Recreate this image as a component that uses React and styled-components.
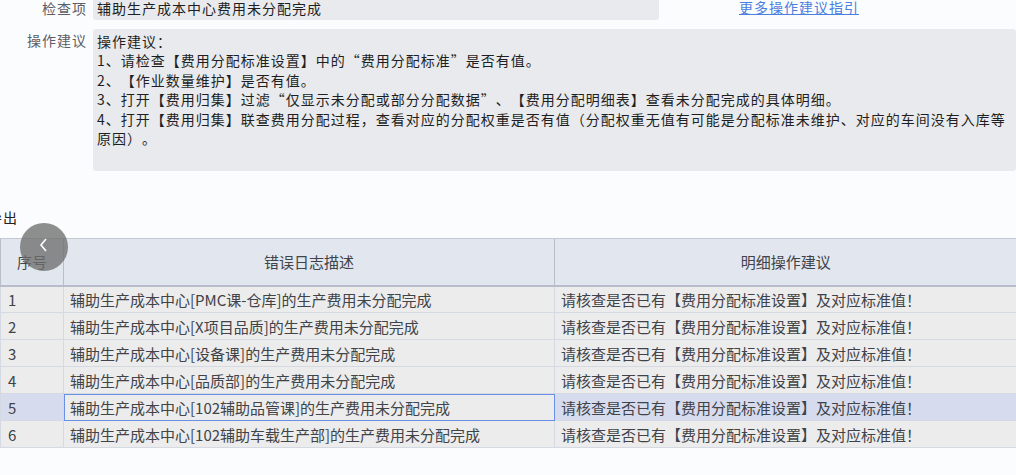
import styled, { createGlobalStyle } from "styled-components";

const GlobalStyle = createGlobalStyle`
  html, body {
    margin: 0;
    padding: 0;
    background: #fbfcfe;
    font-family: "Noto Sans CJK SC", "Noto Sans", sans-serif;
    text-spacing-trim: space-all;
    overflow: hidden;
  }
`;

const Page = styled.div`
  width: 1016px;
  height: 475px;
  overflow: hidden;
`;

const Form = styled.div`
  display: flex;
  flex-direction: column;
  gap: 9px;
  margin-top: -4px;
  letter-spacing: 1px;
`;

const FormRow = styled.div`
  display: flex;
  align-items: flex-start;
  gap: 6px;
`;

const Label = styled.div`
  width: 87px;
  flex: none;
  text-align: right;
  font-size: 14px;
  line-height: 20px;
  color: #5a5e66;
  padding-top: ${(p) => p.$top ?? 2}px;
`;

const Field = styled.div`
  width: ${(p) => p.$width};
  height: ${(p) => p.$height}px;
  box-sizing: border-box;
  background: #e8eaee;
  border-radius: 3px;
  padding: ${(p) => p.$pad};
  font-size: 14px;
  line-height: ${(p) => p.$lh || "20px"};
  color: #1e1f22;
  white-space: pre-wrap;
`;

const Link = styled.a`
  margin-left: 74px;
  margin-top: 2px;
  font-size: 14px;
  line-height: 18px;
  color: #4a7fe0;
  text-decoration: underline;
  cursor: pointer;
`;

const Title = styled.div`
  margin-top: 35px;
  height: 22px;
  font-size: 14px;
  line-height: 22px;
  color: #222;
  letter-spacing: 1px;
  text-indent: -12px;
  overflow: hidden;
`;

const TableWrap = styled.div`
  position: relative;
  margin-top: 10px;
`;

const Table = styled.table`
  width: 1016px;
  border-collapse: collapse;
  table-layout: fixed;
  font-size: 15px;
  color: #404348;
`;

const HeadCell = styled.th`
  height: 47px;
  padding: 0;
  font-weight: normal;
  background: #e2e6ef;
  border-top: 1px solid #c4c9d3;
  border-bottom: 2px solid #b8bdc9;
  border-left: 1px solid #b8bdc9;
  text-align: center;
  box-sizing: border-box;
`;

const Cell = styled.td`
  height: 27px;
  padding: 0 6px;
  box-sizing: border-box;
  background: ${(p) => (p.$sel ? "#d6dcee" : "#ececec")};
  border-bottom: 1px solid #d5d9e2;
  border-left: 1px solid #d5d9e2;
  white-space: nowrap;
  overflow: hidden;
  ${(p) => p.$focus && "outline: 1px solid #6a8fe6; outline-offset: -1px;"}
`;

const NumCell = styled(Cell)`
  padding-left: 7px;
`;

const BackButton = styled.button`
  position: absolute;
  left: 20px;
  top: -15px;
  width: 48px;
  height: 48px;
  border-radius: 50%;
  border: none;
  padding: 0;
  background: rgba(110, 110, 110, 0.78);
  display: flex;
  align-items: center;
  justify-content: center;
  cursor: pointer;
`;

const advice = `操作建议：
1、请检查【费用分配标准设置】中的“费用分配标准”是否有值。
2、【作业数量维护】是否有值。
3、打开【费用归集】过滤“仅显示未分配或部分分配数据”、【费用分配明细表】查看未分配完成的具体明细。
4、打开【费用归集】联查费用分配过程，查看对应的分配权重是否有值（分配权重无值有可能是分配标准未维护、对应的车间没有入库等原因）。`;

const rows = [
  "PMC课-仓库",
  "X项目品质",
  "设备课",
  "品质部",
  "102辅助品管课",
  "102辅助车载生产部",
];

export default function App() {
  return (
    <Page lang="zh-CN">
      <GlobalStyle />
      <Form>
        <FormRow>
          <Label>检查项</Label>
          <Field $width="566px" $height={24} $pad="2px 4px">
            辅助生产成本中心费用未分配完成
          </Field>
          <Link>更多操作建议指引</Link>
        </FormRow>
        <FormRow>
          <Label $top={1}>操作建议</Label>
          <Field $width="923px" $height={142} $pad="3px 4px" $lh="19.4px">
            {advice}
          </Field>
        </FormRow>
      </Form>
      <Title>导出</Title>
      <TableWrap>
        <Table>
          <colgroup>
            <col style={{ width: 63 }} />
            <col style={{ width: 491 }} />
            <col style={{ width: 462 }} />
          </colgroup>
          <thead>
            <tr>
              <HeadCell>序号</HeadCell>
              <HeadCell>错误日志描述</HeadCell>
              <HeadCell>明细操作建议</HeadCell>
            </tr>
          </thead>
          <tbody>
            {rows.map((r, i) => (
              <tr key={r}>
                <NumCell $sel={i === 4}>{i + 1}</NumCell>
                <Cell $focus={i === 4}>{`辅助生产成本中心[${r}]的生产费用未分配完成`}</Cell>
                <Cell $sel={i === 4}>请核查是否已有【费用分配标准设置】及对应标准值！</Cell>
              </tr>
            ))}
          </tbody>
        </Table>
        <BackButton aria-label="返回">
          <svg width="14" height="16" viewBox="0 0 14 16" style={{ marginTop: -4 }}>
            <path d="M9 2 L4 8 L9 14" fill="none" stroke="#fff" strokeWidth="1.6" />
          </svg>
        </BackButton>
      </TableWrap>
    </Page>
  );
}
